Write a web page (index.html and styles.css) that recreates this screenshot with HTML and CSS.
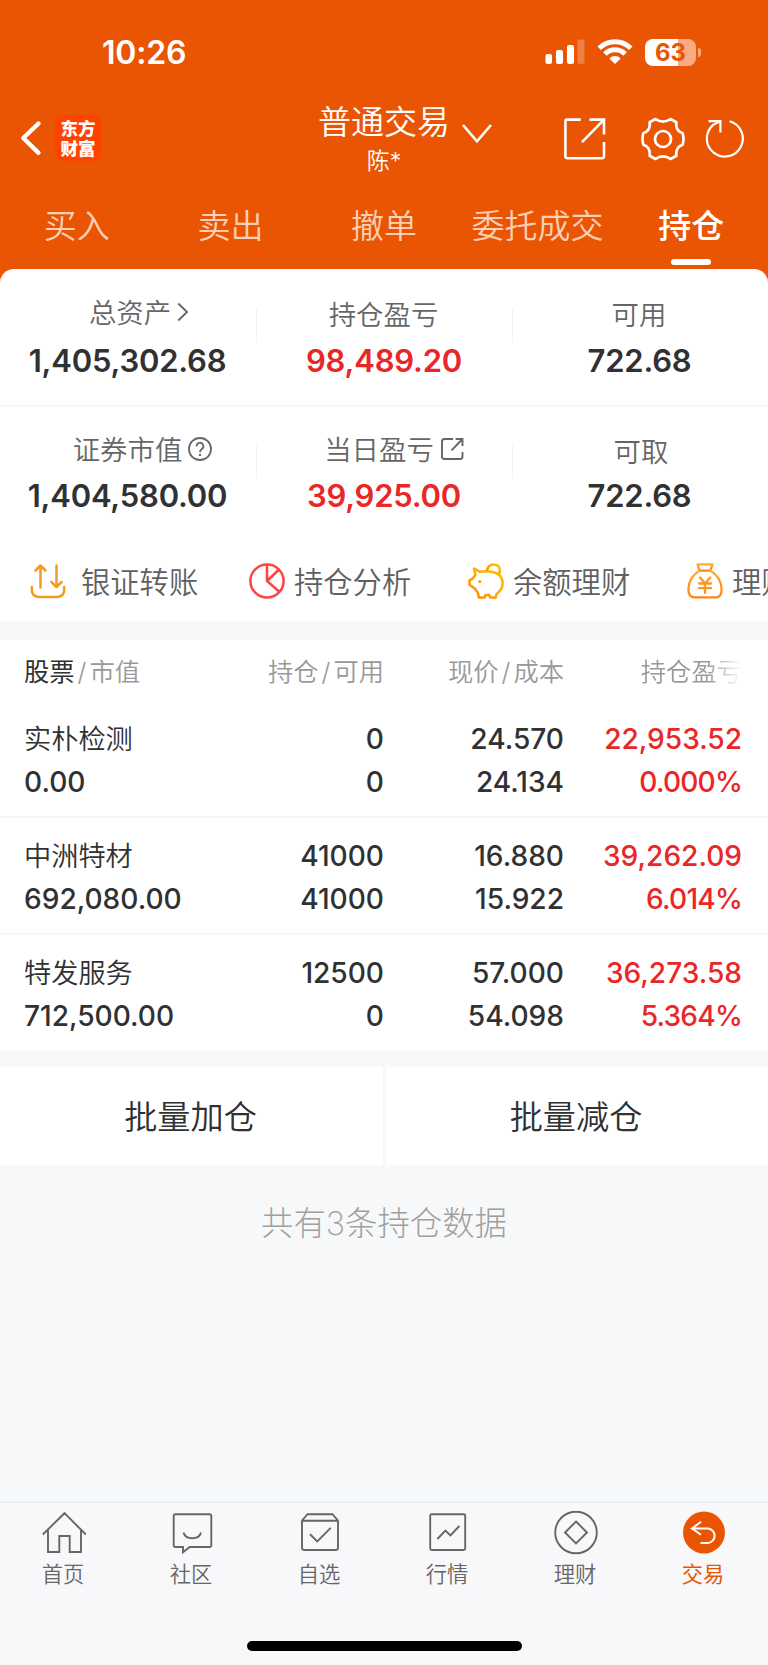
FILE: index.html
```html
<!DOCTYPE html>
<html lang="zh-CN">
<head>
    <meta charset="UTF-8">
    <meta name="viewport" content="width=device-width, initial-scale=1.0">
    <title>普通交易</title>
    <link rel="stylesheet" href="styles.css">
</head>
<body>
    <header class="header">
        <div class="status-bar">
            <span class="time">10:26</span>
            <div class="status-icons">
                <svg class="signal" width="40" height="26" viewBox="0 0 40 26" fill="#fff">
                    <rect x="0.5" y="15" width="6.5" height="10" rx="2"/>
                    <rect x="11" y="11" width="7" height="14" rx="2"/>
                    <rect x="22" y="6" width="7" height="19" rx="2"/>
                    <rect x="32.5" y="0.5" width="7" height="24.5" rx="2" opacity="0.25"/>
                </svg>
                <svg class="wifi" width="36" height="26" viewBox="0 0 36 26" fill="none" stroke="#fff" stroke-width="5">
                    <path d="M2.2 9.2A22.5 22.5 0 0 1 33.8 9.2"/>
                    <path d="M7.9 15A14.3 14.3 0 0 1 28.1 15"/>
                    <path d="M12.3 19.4A8 8 0 0 1 23.7 19.4L18 25.1Z" fill="#fff" stroke="none"/>
                </svg>
                <div class="battery"><span>63</span></div>
                <div class="battery-cap"></div>
            </div>
        </div>

        <div class="nav-bar">
            <div class="nav-left">
                <svg width="22" height="36" viewBox="0 0 22 36" fill="none" stroke="#fff" stroke-width="4.4" stroke-linecap="round" stroke-linejoin="round">
                    <path d="M18.5 3.5L3.3 18L18.5 32.8"/>
                </svg>
                <div class="logo">东方<br>财富</div>
            </div>
            <div class="nav-title">
                <div class="account">
                    <div class="account-type">普通交易</div>
                    <div class="account-name">陈*</div>
                </div>
                <svg class="caret" width="30" height="20" viewBox="0 0 30 20" fill="none" stroke="#fff" stroke-width="2.6">
                    <path d="M1 1L15 17.3L29 1"/>
                </svg>
            </div>
            <div class="nav-right">
                <svg class="share" width="42" height="42" viewBox="0 0 42 42" fill="none" stroke="#fff" stroke-width="2.6">
                    <path d="M16.7 1.6H3.2A1.8 1.8 0 0 0 1.4 3.4V38.4A1.8 1.8 0 0 0 3.2 40.2H38.2A1.8 1.8 0 0 0 40 38.4V24"/>
                    <path d="M25.5 1.6H40V16.5M40 1.6L18 24.2"/>
                </svg>
                <svg class="gear" width="44" height="44" viewBox="0 0 44 44" fill="none" stroke="#fff" stroke-width="2.7" stroke-linejoin="round">
                    <path d="M14.5 2Q18 4.6 22 4.6Q26 4.6 29.5 2L35.4 5.3C34.6 11 36.4 14.4 41.6 16.2Q43.4 22 41.6 27.8C36.4 29.6 34.6 33 35.4 38.7L29.5 42Q26 39.4 22 39.4Q18 39.4 14.5 42L8.6 38.7C9.4 33 7.6 29.6 2.4 27.8Q.6 22 2.4 16.2C7.6 14.4 9.4 11 8.6 5.3Z"/>
                    <circle cx="22" cy="22" r="8"/>
                </svg>
                <svg width="40" height="42" viewBox="0 0 40 42" fill="none" stroke="#fff" stroke-width="2.2">
                    <path d="M24.6 3.2A18 18 0 1 1 8.2 6.8L15 3.2"/>
                    <path d="M3.5 3.2H15.4V14.4"/>
                </svg>
            </div>
        </div>

        <nav class="tabs">
            <a class="tab">买入</a>
            <a class="tab">卖出</a>
            <a class="tab">撤单</a>
            <a class="tab">委托成交</a>
            <a class="tab active">持仓</a>
        </nav>
    </header>

    <section class="assets">
        <div class="asset-row">
            <div class="asset">
                <div class="asset-label raised total-label">总资产
                    <svg width="12" height="20" viewBox="0 0 12 20" fill="none" stroke="#666" stroke-width="1.9"><path d="M1.3 1.5L10 10L1.3 18.5"/></svg>
                </div>
                <div class="asset-value">1,405,302.68</div>
            </div>
            <div class="asset">
                <div class="asset-label">持仓盈亏</div>
                <div class="asset-value red">98,489.20</div>
            </div>
            <div class="asset">
                <div class="asset-label">可用</div>
                <div class="asset-value">722.68</div>
            </div>
        </div>
        <div class="asset-row second">
            <div class="asset">
                <div class="asset-label raised market-label">证券市值
                    <svg width="24" height="24" viewBox="0 0 24 24" fill="none" stroke="#666" stroke-width="1.8">
                        <circle cx="12" cy="12" r="11"/>
                        <path d="M8.6 9.4A3.4 3.4 0 1 1 13.6 12.2Q12 13.2 12 15.2"/>
                        <path d="M12 17V19" stroke-width="2.2"/>
                    </svg>
                </div>
                <div class="asset-value">1,404,580.00</div>
            </div>
            <div class="asset">
                <div class="asset-label raised day-label">当日盈亏
                    <svg width="24" height="24" viewBox="0 0 24 24" fill="none" stroke="#666" stroke-width="1.9">
                        <path d="M13 2H4.5A2.5 2.5 0 0 0 2 4.5V19.5A2.5 2.5 0 0 0 4.5 22H20A2.5 2.5 0 0 0 22.5 19.5V15"/>
                        <path d="M15.6 2H22.5V9M22.5 2L11.5 13.4"/>
                    </svg>
                </div>
                <div class="asset-value red">39,925.00</div>
            </div>
            <div class="asset">
                <div class="asset-label shifted">可取</div>
                <div class="asset-value">722.68</div>
            </div>
        </div>

        <div class="actions">
            <div class="action transfer">
                <svg width="36" height="36" viewBox="0 0 36 36" fill="none" stroke="#f59a23" stroke-width="2.5" stroke-linecap="round" stroke-linejoin="round">
                    <path d="M1.8 24V26.5Q1.8 34 9.5 34H26.5Q34.2 34 34.2 26.5V24"/>
                    <path d="M10.5 24.5V2.5M5.5 7.5L10.5 2.5L15.5 7.5M26.5 2.5V24M21.3 18.8L26.5 24L31.7 18.8"/>
                </svg>
                <span>银证转账</span>
            </div>
            <div class="action">
                <svg width="36" height="36" viewBox="0 0 36 36" fill="none" stroke="#ff4242" stroke-width="2.5">
                    <circle cx="18" cy="18" r="16.6"/>
                    <path d="M18 1.5V18L30 28.5M18 18L29.5 7"/>
                </svg>
                <span>持仓分析</span>
            </div>
            <div class="action">
                <svg width="36" height="36" viewBox="0 0 36 36" fill="none" stroke="url(#pig)" stroke-width="2.5" stroke-linejoin="round">
                    <defs><linearGradient id="pig" x1="0" y1="1" x2="1" y2="0"><stop offset="0" stop-color="#ff8a00"/><stop offset="1" stop-color="#fdc500"/></linearGradient></defs>
                    <path d="M6 5.5L11.5 8.7Q15 7.8 22 8.4Q34.6 9.8 34.6 20.2Q34.6 26.5 28.6 31L27.6 34.6H22.2L21.3 32H17.5L16.7 34.6H11L9.8 29.5L6.5 25.2L1.5 21.8V17.3L5 15.3L7.4 11.7Z"/>
                    <path d="M19 8.2Q19.8 1.5 25.5 1.5Q31.8 1.5 31.8 7.6Q31.8 9.6 30.9 11.2"/>
                    <circle cx="11.8" cy="18.6" r="1.7" fill="#ffa200" stroke="none"/>
                </svg>
                <span>余额理财</span>
            </div>
            <div class="action">
                <svg width="36" height="36" viewBox="0 0 36 36" fill="none" stroke="url(#bag)" stroke-width="2.3" stroke-linejoin="round" stroke-linecap="round">
                    <defs><linearGradient id="bag" x1="0" y1="0" x2="0" y2="1"><stop offset="0" stop-color="#ffad33"/><stop offset="1" stop-color="#ff8412"/></linearGradient></defs>
                    <path d="M10.5 1.4H25.6L23.2 7.6H12.6Z"/>
                    <path d="M12.6 7.6Q1.4 14.6 1.4 26.5Q1.4 34.4 7.5 34.4H28.7Q34.6 34.4 34.6 26.5Q34.6 14.6 23.2 7.6"/>
                    <path d="M13 14.5L18 20.5L23.2 14.5M12 20.5H24M12 25.2H24M18 20.5V30" stroke="#ff9620"/>
                </svg>
                <span>理财</span>
            </div>
        </div>
    </section>

    <section class="holdings">
        <div class="row head">
            <div><b>股票</b><i>/</i>市值</div>
            <div>持仓<i>/</i>可用</div>
            <div>现价<i>/</i>成本</div>
            <div class="fade">持仓盈亏</div>
        </div>
        <div class="row">
            <div><span class="name">实朴检测</span><br>0.00</div>
            <div>0<br>0</div>
            <div>24.570<br>24.134</div>
            <div class="red">22,953.52<br><span class="percent">0.000%</span></div>
        </div>
        <div class="row">
            <div><span class="name">中洲特材</span><br>692,080.00</div>
            <div>41000<br>41000</div>
            <div>16.880<br>15.922</div>
            <div class="red">39,262.09<br><span class="percent">6.014%</span></div>
        </div>
        <div class="row">
            <div><span class="name">特发服务</span><br>712,500.00</div>
            <div>12500<br>0</div>
            <div>57.000<br>54.098</div>
            <div class="red">36,273.58<br><span class="percent">5.364%</span></div>
        </div>
    </section>

    <div class="batch">
        <button>批量加仓</button>
        <button>批量减仓</button>
    </div>
    <p class="total">共有3条持仓数据</p>

    <footer class="tab-bar">
        <div class="items">
            <div class="item">
                <svg width="44" height="44" viewBox="0 0 44 44"><path d="M.8 23.5L22.5 2.2L43.8 23.5M6 19V41H17.3V25H27.7V41H39V19"/></svg>
                <span>首页</span>
            </div>
            <div class="item">
                <svg width="44" height="44" viewBox="0 0 44 44"><path d="M5 3.2H39.5Q41.3 3.2 41.3 5V34.2Q41.3 36 39.5 36H19.7L13 41.2V36H5.5Q3.7 36 3.7 34.2V5Q3.7 3.2 5.5 3.2M13.5 21.5C15.5 29.2 29 29.2 31 21.5"/></svg>
                <span>社区</span>
            </div>
            <div class="item">
                <svg width="44" height="44" viewBox="0 0 44 44"><path d="M9.5 3.2H34.5L40 9.5V36.8Q40 39 37.8 39H6.2Q4 39 4 36.8V9.5ZM4 9.8H40M12 23.2L19.3 30.4L32.7 16.8"/></svg>
                <span>自选</span>
            </div>
            <div class="item">
                <svg width="44" height="44" viewBox="0 0 44 44"><rect x="4.2" y="3.2" width="35" height="35.8" rx="1.5"/><path d="M11.4 28L19.4 19.5L24.4 24.5L33.4 15"/></svg>
                <span>行情</span>
            </div>
            <div class="item">
                <svg width="44" height="44" viewBox="0 0 44 44"><circle cx="22" cy="21.5" r="20.8"/><path d="M22 10.5L33 21.5L22 32.5L11 21.5Z"/></svg>
                <span>理财</span>
            </div>
            <div class="item active">
                <svg width="44" height="44" viewBox="0 0 44 44"><circle class="disc" cx="22" cy="21.5" r="21"/><path d="M19 10.8L10 17.5L19 23.8M10 17.5H26A7.5 7.3 0 0 1 26 32H18.5"/></svg>
                <span>交易</span>
            </div>
        </div>
        <div class="home-indicator"></div>
    </footer>
</body>
</html>
```

FILE: styles.css
```css
* {
    box-sizing: border-box;
}

body {
    margin: 0;
    height: 1665px;
    display: flex;
    flex-direction: column;
    overflow: hidden;
    font-family: Inter, "Noto Sans CJK SC", sans-serif;
    background-color: #f7f8fa;
    color: #303132;
}

svg {
    display: block;
    flex: none;
}

/* header */
.header {
    height: 283px;
    flex: none;
    background-color: #ea5504;
    color: #fff;
}

.status-bar {
    height: 98px;
    padding: 6px 67px 0 102px;
    display: flex;
    align-items: center;
    justify-content: space-between;
}

.time {
    font-size: 32px;
    font-weight: 600;
    letter-spacing: -0.2px;
}

.status-icons {
    display: flex;
    align-items: center;
}

.wifi {
    margin: 0 12px 0 12px;
}

.battery {
    width: 51px;
    height: 27px;
    border-radius: 8px;
    background: linear-gradient(to right, #fff 64%, #f6ab82 64%);
    color: #ea5504;
    font-size: 24px;
    font-weight: 700;
    line-height: 27px;
    text-align: center;
}

.battery-cap {
    width: 3px;
    height: 9px;
    margin-left: 2px;
    border-radius: 0 3px 3px 0;
    background-color: #f6ab82;
}

.nav-bar {
    height: 92px;
    padding: 0 22px 0 20px;
    display: grid;
    grid-template-columns: 270px 1fr 182px;
}

.nav-left {
    display: flex;
    align-items: center;
    gap: 13px;
    padding-bottom: 12px;
    height: 92px;
}

.logo {
    width: 46px;
    height: 46px;
    padding-top: 4px;
    border-radius: 8px;
    background-color: #ff4200;
    font-size: 17.5px;
    font-weight: 900;
    line-height: 19.5px;
    text-align: center;
}

.nav-title {
    display: flex;
    padding-left: 28px;
    gap: 12px;
}

.account {
    text-align: center;
    padding-top: 3px;
}

.account-type {
    font-size: 33px;
    font-weight: 350;
    line-height: 42px;
}

.account-name {
    font-size: 23px;
    font-weight: 350;
    line-height: 36px;
}

.caret {
    margin-top: 26px;
}

.nav-right {
    display: flex;
    align-items: center;
    height: 92px;
    padding-bottom: 11px;
}

.gear {
    margin: 0 20px 0 35px;
}

.tabs {
    height: 79px;
    display: grid;
    grid-template-columns: repeat(5, 1fr);
}

.tab {
    display: flex;
    flex-direction: column;
    align-items: center;
    font-size: 33px;
    font-weight: 350;
    line-height: 73px;
    color: #fbcfb6;
}

.tab.active {
    color: #fff;
    font-weight: 500;
}

.tab.active::after {
    content: "";
    width: 40px;
    height: 6px;
    border-radius: 3px;
    background-color: #fff;
    margin-top: -4px;
}

/* assets */
.assets {
    height: 352px;
    margin-top: -14px;
    flex: none;
    border-radius: 14px 14px 0 0;
    background-color: #fff;
}

.asset-row {
    height: 138px;
    display: grid;
    grid-template-columns: 257px 256px 255px;
    border-bottom: 2px solid #f6f6f7;
}

.asset-row.second {
    height: 131px;
    border-bottom: none;
}

.asset {
    padding-top: 24px;
    text-align: center;
    background: linear-gradient(#f3f3f4, #f3f3f4) no-repeat right 39px / 1px 34px;
}

.second .asset {
    padding-top: 23px;
    background-position: right 38px;
}

.asset:last-child {
    background: none;
}

.asset-label {
    display: flex;
    align-items: center;
    justify-content: center;
    gap: 6px;
    height: 40px;
    padding-right: 3px;
    font-size: 27.4px;
    font-weight: 350;
    color: #666;
}

.asset-label.raised {
    padding-right: 0;
    padding-bottom: 4px;
}

.asset-label.shifted {
    padding-left: 4px;
}

.asset-label svg {
    margin-top: 2px;
}

.total-label {
    padding-left: 21px;
}

.market-label {
    padding-left: 28px;
}

.day-label {
    padding-left: 18px;
}

.asset-value {
    margin: 2px 2px 0 0;
    font-size: 31px;
    font-weight: 600;
    line-height: 52px;
    letter-spacing: -0.2px;
}

.second .asset-value {
    line-height: 48px;
}

.red {
    color: #ea2626;
}

.actions {
    display: flex;
    height: 83px;
    padding: 12px 0 0 30px;
    overflow: hidden;
}

.action {
    display: flex;
    align-items: center;
    gap: 9px;
    flex: none;
    width: 219px;
    height: 60px;
    font-size: 29.3px;
    font-weight: 350;
    color: #606060;
    white-space: nowrap;
}

.action svg {
    margin-top: 2px;
}

.action.transfer {
    gap: 15px;
}

/* holdings */
.holdings {
    height: 411px;
    margin-top: 19px;
    flex: none;
    background-color: #fff;
}

.row {
    height: 117px;
    padding: 17px 26px 0 24px;
    display: grid;
    grid-template-columns: 200px 160px 180px 178px;
    font-size: 28.1px;
    font-weight: 500;
    line-height: 43px;
    text-align: right;
    border-bottom: 2px solid #f6f6f7;
}

.row div:first-child {
    text-align: left;
}

.row:last-child {
    border-bottom: none;
}

.row .name {
    font-size: 27.2px;
    font-weight: 350;
}

.row .percent {
    letter-spacing: -0.8px;
}

.row.head {
    height: 61px;
    padding-top: 10px;
    font-size: 25.3px;
    font-weight: 350;
    color: #999;
    border: none;
}

.head b {
    font-weight: 400;
    color: #303132;
}

.head i {
    font-style: normal;
    margin: 0 3px;
}

.fade {
    -webkit-mask-image: linear-gradient(to right, #000 80%, transparent);
    mask-image: linear-gradient(to right, #000 80%, transparent);
}

/* batch buttons */
.batch {
    height: 98px;
    margin-top: 16px;
    flex: none;
    display: grid;
    grid-template-columns: 383px 382px;
    gap: 3px;
}

.batch button {
    border: none;
    padding: 0 2px 4px 0;
    background-color: #fff;
    color: #303132;
    font-family: inherit;
    font-size: 33.2px;
    font-weight: 350;
}

.total {
    margin: 37px 0 0;
    font-size: 32.4px;
    font-weight: 200;
    line-height: 44px;
    text-align: center;
    color: #a0a0a0;
}

/* bottom bar */
.tab-bar {
    height: 164px;
    margin-top: auto;
    flex: none;
    border-top: 2px solid #e9eef0;
    background-color: #f8f8fb;
}

.items {
    display: grid;
    grid-template-columns: repeat(6, 128px);
    height: 138px;
    padding-top: 8px;
}

.item {
    display: flex;
    flex-direction: column;
    align-items: center;
    font-size: 21.3px;
    font-weight: 350;
    line-height: 38px;
    color: #666;
}

.item span {
    padding-right: 2px;
}

.item svg {
    fill: none;
    stroke: #666;
    stroke-width: 1.9;
}

.item.active {
    color: #ea5504;
    font-weight: 400;
}

.item.active svg {
    stroke: #fff;
    stroke-width: 2;
}

.item .disc {
    fill: #ea5504;
    stroke: none;
}

.home-indicator {
    width: 275px;
    height: 10px;
    margin: 0 auto;
    border-radius: 5px;
    background-color: #000;
}
```
